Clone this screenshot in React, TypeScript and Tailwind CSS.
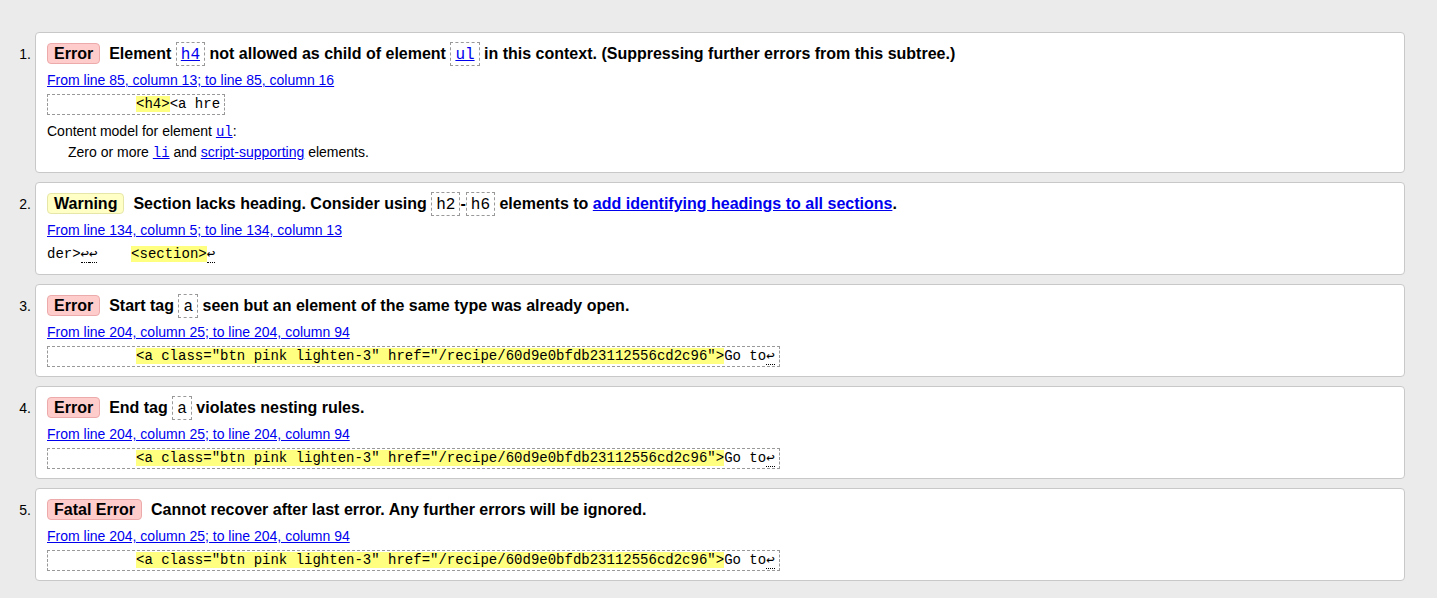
const SANS = "font-['Liberation_Sans','Arial',sans-serif]";
const MONO = "font-['Liberation_Mono','DejaVu_Sans_Mono',monospace]";

function Code({ children, link }: { children: string; link?: boolean }) {
  return (
    <code
      className={`${MONO} inline-block align-top border border-dashed border-[#999] px-[4px] pt-[3px] pb-px leading-[18px] font-normal ${
        link ? "text-[#0000ee] underline" : "text-black"
      }`}
    >
      {children}
    </code>
  );
}

function Badge({ kind }: { kind: "Error" | "Warning" | "Fatal Error" }) {
  const tone =
    kind === "Warning"
      ? "bg-[#ffffc6] border-[#e6e6a8]"
      : "bg-[#ffcccc] border-[#ecaaaa]";
  return (
    <strong
      className={`inline-block rounded-[4px] border px-[6px] leading-[19px] mr-[9px] ${tone}`}
    >
      {kind}
    </strong>
  );
}

function Lf() {
  return <span className="border-b border-dotted border-black">↩</span>;
}

function Extract({ children, bare }: { children: React.ReactNode; bare?: boolean }) {
  return (
    <div className="mt-[5px] flex">
      <code
        className={`${MONO} block whitespace-pre text-[14px] leading-[17px] py-[1px] border border-dashed ${
          bare ? "border-transparent px-0 -ml-px" : "border-[#999] px-[4px]"
        }`}
      >
        {children}
      </code>
    </div>
  );
}

function Hl({ children }: { children: string }) {
  return <span className="bg-[#ffff80]">{children}</span>;
}

function Loc({ text }: { text: string }) {
  return (
    <p className="mt-[5px] text-[14px] leading-[18px]">
      <a className="text-[#0000ee] underline" href="#">
        {text}
      </a>
    </p>
  );
}

type Msg = {
  badge: "Error" | "Warning" | "Fatal Error";
  title: React.ReactNode;
  loc: string;
  extract: React.ReactNode;
  bare?: boolean;
  extra?: React.ReactNode;
};

const SPACES10 = "          ";

const MESSAGES: Msg[] = [
  {
    badge: "Error",
    title: (
      <>
        Element <Code link>h4</Code> not allowed as child of element <Code link>ul</Code> in this
        context. (Suppressing further errors from this subtree.)
      </>
    ),
    loc: "From line 85, column 13; to line 85, column 16",
    extract: (
      <>
        {SPACES10}
        <Hl>{"<h4>"}</Hl>
        {"<a hre"}
      </>
    ),
    extra: (
      <div className="mt-[6px] text-[14px] leading-[21px]">
        <p className="h-[21px]">
          Content model for element{" "}
          <a href="#" className={`${MONO} text-[#0000ee] underline`}>
            ul
          </a>
          :
        </p>
        <p className="h-[21px] pl-[21px]">
          Zero or more{" "}
          <a href="#" className={`${MONO} text-[#0000ee] underline`}>
            li
          </a>{" "}
          and{" "}
          <a href="#" className="text-[#0000ee] underline">
            script-supporting
          </a>{" "}
          elements.
        </p>
      </div>
    ),
  },
  {
    badge: "Warning",
    title: (
      <>
        Section lacks heading. Consider using <Code>h2</Code>-<Code>h6</Code> elements to{" "}
        <a href="#" className="text-[#0000ee] underline">
          add identifying headings to all sections
        </a>
        .
      </>
    ),
    loc: "From line 134, column 5; to line 134, column 13",
    bare: true,
    extract: (
      <>
        {"der>"}
        <Lf />
        <Lf />
        {"    "}
        <Hl>{"<section>"}</Hl>
        <Lf />
      </>
    ),
  },
  {
    badge: "Error",
    title: (
      <>
        Start tag <Code>a</Code> seen but an element of the same type was already open.
      </>
    ),
    loc: "From line 204, column 25; to line 204, column 94",
    extract: (
      <>
        {SPACES10}
        <Hl>{'<a class="btn pink lighten-3" href="/recipe/60d9e0bfdb23112556cd2c96">'}</Hl>
        {"Go to"}
        <Lf />
      </>
    ),
  },
  {
    badge: "Error",
    title: (
      <>
        End tag <Code>a</Code> violates nesting rules.
      </>
    ),
    loc: "From line 204, column 25; to line 204, column 94",
    extract: (
      <>
        {SPACES10}
        <Hl>{'<a class="btn pink lighten-3" href="/recipe/60d9e0bfdb23112556cd2c96">'}</Hl>
        {"Go to"}
        <Lf />
      </>
    ),
  },
  {
    badge: "Fatal Error",
    title: <>Cannot recover after last error. Any further errors will be ignored.</>,
    loc: "From line 204, column 25; to line 204, column 94",
    extract: (
      <>
        {SPACES10}
        <Hl>{'<a class="btn pink lighten-3" href="/recipe/60d9e0bfdb23112556cd2c96">'}</Hl>
        {"Go to"}
        <Lf />
      </>
    ),
  },
];

export default function App() {
  return (
    <div className={`${SANS} min-h-screen bg-[#ebebeb] text-black pt-[32px] pb-[16px] pr-[32px]`}>
      <ol className="flex flex-col gap-[9px]">
        {MESSAGES.map((m, i) => (
          <li key={i} className="flex">
            <span className="w-[35px] shrink-0 pr-[4px] pt-[10px] text-right text-[14px] leading-[24px]">
              {i + 1}.
            </span>
            <div className="flex-1 rounded-[4px] border border-[#c8c8c8] bg-white px-[11px] pt-[9px] pb-[9px]">
              <p className="text-[16px] font-bold leading-[24px]">
                <Badge kind={m.badge} />
                {m.title}
              </p>
              <Loc text={m.loc} />
              <Extract bare={m.bare}>{m.extract}</Extract>
              {m.extra}
            </div>
          </li>
        ))}
      </ol>
    </div>
  );
}
